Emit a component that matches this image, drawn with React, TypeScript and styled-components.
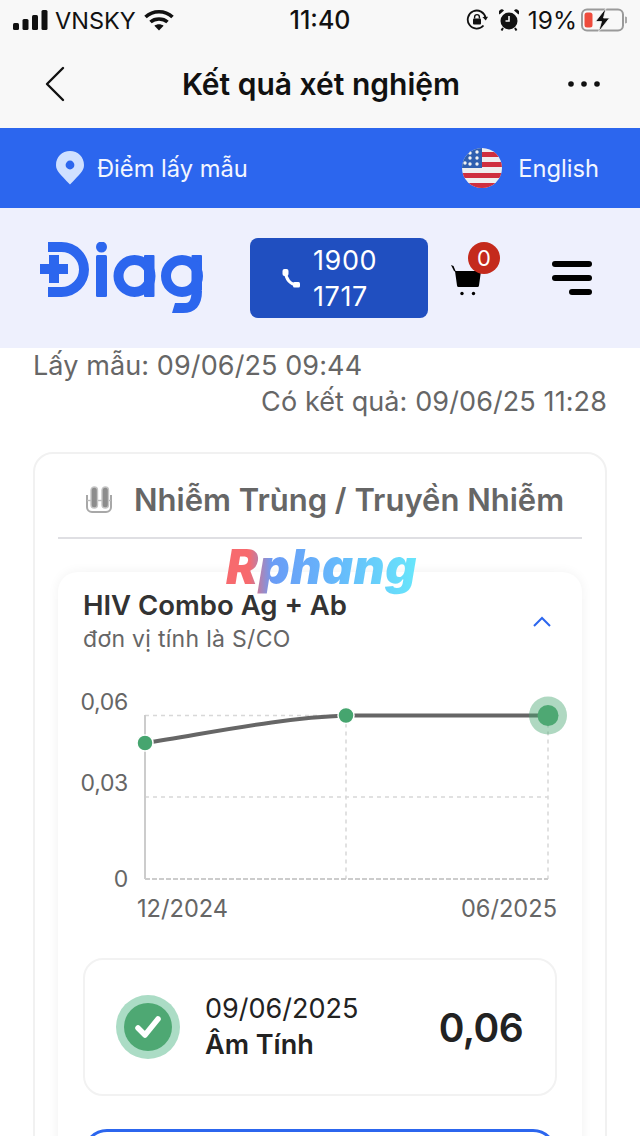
import styled, { createGlobalStyle } from 'styled-components';

const GlobalStyle = createGlobalStyle`
    html, body {
        margin: 0;
        padding: 0;
        height: 1136px;
        overflow: hidden;
        background: #ffffff;
        font-family: "Inter", "Noto Sans", sans-serif;
    }
    * { box-sizing: border-box; }
`;

const Page = styled.div`
    position: relative;
    width: 640px;
    height: 1136px;
    overflow: hidden;
`;

const TopChrome = styled.div`
    background: #f8f8f8;
    height: 128px;
`;

const StatusBar = styled.div`
    height: 40px;
    padding: 0 13px;
    display: grid;
    grid-template-columns: 1fr auto 1fr;
    align-items: center;
    color: #111111;
`;

const StatusGroup = styled.div<{ $end?: boolean }>`
    display: flex;
    align-items: center;
    justify-content: ${({ $end }) => ($end ? 'flex-end' : 'flex-start')};
    font-size: 24px;
    font-weight: 400;
`;

const Carrier = styled.span`
    font-size: 23.5px;
    margin: 0 8px 0 7px;
`;

const Clock = styled.span`
    font-size: 25px;
    font-weight: 500;
`;

const Percent = styled.span`
    margin: 0 4px 0 9px;
    font-size: 24.5px;
`;

const IconGap = styled.span`
    width: 11px;
`;

const NavBar = styled.div`
    height: 88px;
    padding: 0 40px 0 44px;
    display: flex;
    align-items: center;
    justify-content: space-between;
`;

const NavTitle = styled.div`
    font-size: 30px;
    font-weight: 600;
    color: #111111;
    margin-left: 8px;
`;

const BlueBar = styled.div`
    height: 80px;
    background: #2c66ee;
    padding: 0 41px 0 56px;
    display: flex;
    align-items: center;
    justify-content: space-between;
    color: #f3f6ff;
    font-size: 23.7px;
`;

const BarItem = styled.div<{ $gap: number }>`
    display: flex;
    align-items: center;
    gap: ${({ $gap }) => $gap}px;
`;

const Header = styled.div`
    height: 140px;
    background: #eef0fd;
    padding: 30px 48px 0 40px;
    display: flex;
    align-items: flex-start;
`;

const Logo = styled.svg`
    width: 163px;
    height: 72px;
    margin-top: 4px;
    flex: none;
`;

const PhoneButton = styled.div`
    width: 178px;
    height: 80px;
    margin-left: 47px;
    background: #204fc0;
    border-radius: 8px;
    padding-left: 32px;
    display: flex;
    align-items: center;
    gap: 13px;
    color: #ffffff;
    font-size: 27px;
    line-height: 36px;
    letter-spacing: 0.6px;
`;

const PhoneIcon = styled.svg`
    flex: none;
`;

const PhoneText = styled.span`
    width: 80px;
    padding-top: 1px;
`;

const CartBox = styled.div`
    position: relative;
    width: 32px;
    height: 36px;
    margin: 27px 0 0 23px;
`;

const CartBadge = styled.span`
    position: absolute;
    left: 17px;
    top: -23px;
    width: 32px;
    height: 32px;
    border-radius: 50%;
    background: #c42a1c;
    color: #ffffff;
    font-size: 22px;
    display: flex;
    align-items: center;
    justify-content: center;
`;

const MenuIcon = styled.div`
    margin: 23px 0 0 auto;
    width: 40px;
    display: flex;
    flex-direction: column;
    align-items: flex-end;
    gap: 8px;
`;

const MenuBar = styled.span<{ $w: number }>`
    display: block;
    width: ${({ $w }) => $w}px;
    height: 6px;
    border-radius: 3px;
    background: #000000;
`;

const Content = styled.div`
    padding: 0 33px;
`;

const Dates = styled.div`
    font-size: 27px;
    line-height: 36px;
    color: #666666;
    letter-spacing: 0.1px;
`;

const DateRight = styled.div`
    text-align: right;
`;

const GroupCard = styled.div`
    margin-top: 32px;
    border: 2px solid #f1f1f1;
    border-radius: 20px;
    padding: 0 23px;
    height: 800px;
`;

const GroupTitle = styled.div`
    height: 85px;
    padding: 8px 0 0 28px;
    display: flex;
    align-items: center;
    gap: 22px;
    font-size: 31px;
    font-weight: 600;
    color: #666666;
    border-bottom: 2px solid #dfdfe3;
`;

const TestCard = styled.div`
    margin-top: 33px;
    border-radius: 20px;
    padding: 16px 25px 0;
    box-shadow: 0 0 12px rgba(0, 0, 0, 0.06);
    height: 700px;
`;

const TestHead = styled.div`
    display: flex;
    align-items: center;
    justify-content: space-between;
    padding-right: 5px;
`;

const TestName = styled.div`
    font-size: 27.5px;
    line-height: 34px;
    font-weight: 600;
    color: #333333;
`;

const TestUnit = styled.div`
    font-size: 23px;
    line-height: 34px;
    color: #666666;
    letter-spacing: 0.3px;
`;

const Chart = styled.svg`
    display: block;
    width: 524px;
    height: 250px;
    margin: 24px 0 0 -25px;
    font-family: "Inter", sans-serif;
    font-size: 23.6px;
    fill: #666666;
`;

const AxisValue = styled.text`
    font-size: 23px;
    letter-spacing: -0.3px;
`;

const ResultCard = styled.div`
    margin-top: 28px;
    height: 138px;
    border: 2px solid #f2f2f2;
    border-radius: 20px;
    padding: 0 32px 0 31px;
    display: flex;
    align-items: center;
`;

const ResultBadge = styled.div`
    width: 64px;
    height: 64px;
    border-radius: 50%;
    background: #abdcc5;
    display: flex;
    align-items: center;
    justify-content: center;
`;

const ResultDot = styled.div`
    width: 48px;
    height: 48px;
    border-radius: 50%;
    background: #4ea873;
    display: flex;
    align-items: center;
    justify-content: center;
`;

const ResultText = styled.div`
    margin-left: 25px;
    font-size: 27px;
    line-height: 36px;
    color: #222222;
    flex: 1;
`;

const ResultLabel = styled.div`
    font-weight: 600;
`;

const ResultValue = styled.div`
    font-size: 39px;
    font-weight: 600;
    letter-spacing: -0.6px;
    color: #222222;
`;

const OutlineButton = styled.div`
    margin-top: 33px;
    height: 80px;
    border: 3px solid #2c66ee;
    border-radius: 24px;
`;

const Watermark = styled.div`
    position: absolute;
    left: 226px;
    top: 537px;
    font-family: "Inter", sans-serif;
    font-size: 48px;
    font-weight: 900;
    font-style: italic;
    line-height: 60px;
    letter-spacing: 0.6px;
    color: transparent;
    background: linear-gradient(90deg, #f76a6e 0%, #f76a6e 12%, #6a9cf6 24%, #66b6fb 55%, #68e6fb 100%);
    -webkit-background-clip: text;
    background-clip: text;
`;

const Signal = () => (
    <svg width="35" height="20" viewBox="0 0 35 20">
        <rect x="0" y="13" width="6" height="7" rx="1.5" fill="#111" />
        <rect x="9.5" y="9" width="6" height="11" rx="1.5" fill="#111" />
        <rect x="19" y="5" width="6" height="15" rx="1.5" fill="#111" />
        <rect x="28.5" y="0" width="6" height="20" rx="1.5" fill="#111" />
    </svg>
);

const Wifi = () => (
    <svg width="30" height="22" viewBox="0 0 30 22" fill="none" stroke="#111" strokeWidth="3.6">
        <path d="M1.5 8 C9 1 21 1 28.5 8" />
        <path d="M6.5 13 C11 9 19 9 23.5 13" />
        <path d="M15 21.5 L10.4 16.8 C13 14.8 17 14.8 19.6 16.8 Z" fill="#111" stroke="none" />
    </svg>
);

const RotationLock = () => (
    <svg width="22" height="22" viewBox="0 0 22 22" fill="none" stroke="#111" strokeWidth="1.8">
        <path d="M17.5 16.5 A9 9 0 1 1 19.6 9" />
        <path d="M16.4 8 L19.8 11.4 L22 7.8" fill="#111" stroke="none" />
        <rect x="7" y="9.5" width="8" height="6" rx="1" fill="#111" stroke="none" />
        <path d="M8.6 9.5 V8 a2.4 2.4 0 0 1 4.8 0 V9.5" strokeWidth="1.4" />
    </svg>
);

const Alarm = () => (
    <svg width="20" height="22" viewBox="0 0 20 22">
        <circle cx="10" cy="12" r="8.5" fill="#111" />
        <path d="M10 7 V12 H6.5" fill="none" stroke="#f8f8f8" strokeWidth="1.6" />
        <path d="M0.5 5.5 L5 1.5 A3 3 0 0 0 0.5 5.5 Z M19.5 5.5 L15 1.5 A3 3 0 0 1 19.5 5.5 Z" fill="#111" />
        <path d="M4 19 L2.5 21.5 M16 19 L17.5 21.5" stroke="#111" strokeWidth="2" />
    </svg>
);

const Battery = () => (
    <svg width="46" height="24" viewBox="0 0 46 24">
        <rect x="1" y="1.5" width="41" height="21" rx="5" fill="none" stroke="#9a9a9a" strokeWidth="2" />
        <path d="M44 8.5 a3 3.5 0 0 1 0 7 Z" fill="#a8a8a8" />
        <rect x="3.5" y="4.5" width="8" height="15" rx="2.5" fill="#ee4b3c" />
        <path d="M25 0 L14.5 13.5 H20.5 L17.5 24 L28.5 10 H22.5 Z" fill="#111" stroke="#f8f8f8" strokeWidth="0.8" />
    </svg>
);

const BackIcon = () => (
    <svg width="22" height="36" viewBox="0 0 22 36" fill="none" stroke="#111" strokeWidth="2.4" strokeLinecap="round" strokeLinejoin="round">
        <path d="M19 2 L3 18 L19 34" />
    </svg>
);

const MoreIcon = () => (
    <svg width="32" height="6" viewBox="0 0 32 6" fill="#111">
        <circle cx="3" cy="3" r="2.8" />
        <circle cx="16" cy="3" r="2.8" />
        <circle cx="29" cy="3" r="2.8" />
    </svg>
);

const PinIcon = () => (
    <svg width="28" height="34" viewBox="0 0 28 34">
        <path d="M14 0 C6 0 0 6 0 14 C0 20 4 23 14 33.5 C24 23 28 20 28 14 C28 6 22 0 14 0 Z" fill="#cfe0ff" />
        <circle cx="14" cy="14" r="4.4" fill="#2c66ee" />
    </svg>
);

const FlagIcon = () => (
    <svg width="40" height="40" viewBox="0 0 40 40">
        <defs>
            <clipPath id="flag-clip"><circle cx="20" cy="20" r="20" /></clipPath>
        </defs>
        <g clipPath="url(#flag-clip)">
            <rect width="40" height="40" fill="#efefef" />
            {[4, 14, 25, 35].map(y => <rect key={y} x={y < 20 ? 20 : 0} y={y} width="40" height="5" fill="#cf2f3f" />)}
            <rect width="20" height="20" fill="#2f5fb0" />
            {[[8, 5], [15, 4], [8, 10], [15, 10], [3, 15], [8, 16], [15, 16]].map(([x, y]) => (
                <circle key={`${x}-${y}`} cx={x} cy={y} r="1.7" fill="#f2f2f2" />
            ))}
        </g>
    </svg>
);

const DiagLogo = () => (
    <Logo viewBox="40 242 163 72">
        <g fill="#2c66ee">
            {/* D with cross */}
            <path d="M48 242 H61.5 A27.5 27.5 0 0 1 61.5 297 H48 V287 H61.5 A17.5 17.5 0 0 0 61.5 252 H48 Z" />
            <path d="M49 255 H59 V264 H68 V274 H59 V283 H49 V274 H40 V264 H49 Z" />
            {/* i */}
            <rect x="96" y="255" width="11" height="42" rx="1.5" />
            <circle cx="101.5" cy="247" r="5.5" />
            {/* a */}
            <rect x="144" y="255" width="10.5" height="42" rx="1" />
            {/* g */}
            <rect x="191.5" y="255" width="10.5" height="36" rx="1" />
            <path d="M175 303 H186 C189.5 303 191.5 299 191.5 291 H202 C202 306 195 313 183 313 H172 Z" />
        </g>
        <g fill="none" stroke="#2c66ee" strokeWidth="10">
            <circle cx="134.5" cy="276" r="16" />
            <circle cx="182" cy="276" r="16" />
        </g>
    </Logo>
);

const CartIcon = () => (
    <svg width="32" height="36" viewBox="0 0 32 36">
        <path d="M0 0 L2.5 1 L5 7 L3 6 Z" fill="#000" />
        <path d="M4 6 H30 L28 20.5 Q27.8 22 26.5 22 H7.5 Q6.2 22 6 20.5 Z" fill="#000" />
        <circle cx="11" cy="28.5" r="1.7" fill="#000" />
        <circle cx="22.5" cy="28.5" r="1.7" fill="#000" />
    </svg>
);

const TubesIcon = () => (
    <svg width="26" height="27" viewBox="0 0 26 27" fill="none">
        <path d="M1 9 V21 a5 5 0 0 0 5 5 H20 a5 5 0 0 0 5 -5 V9" stroke="#a8a8a8" strokeWidth="2" />
        <path d="M1 14.5 H25" stroke="#bbbbbb" strokeWidth="1.4" />
        <rect x="5" y="1" width="6.5" height="21" rx="3.2" fill="#8c8c8c" stroke="#c4c4c4" strokeWidth="1.4" />
        <rect x="16" y="1" width="6.5" height="21" rx="3.2" fill="#8c8c8c" stroke="#c4c4c4" strokeWidth="1.4" />
    </svg>
);

const points = [
    { x: 145, y: 743, r: 7 },
    { x: 346, y: 715.5, r: 7 },
];

const TrendChart = () => (
    <Chart viewBox="58 680 524 250">
        <g stroke="#d8d8d8" strokeWidth="1.5" strokeDasharray="4 4" fill="none">
            <path d="M145 715.5 H548" />
            <path d="M145 797 H548" />
            <path d="M346 715.5 V879" />
            <path d="M548 715.5 V879" />
        </g>
        <path d="M145 715 V879" fill="none" stroke="#cccccc" strokeWidth="2" />
        <path d="M145 879 H548" fill="none" stroke="#cccccc" strokeWidth="2" strokeDasharray="5 2" />
        <path d="M145 743 C 215 732 280 718 346 715.5 H548" fill="none" stroke="#666666" strokeWidth="4" />
        {points.map(p => (
            <circle key={p.x} cx={p.x} cy={p.y} r={p.r + 1} fill="#46a56f" stroke="#ffffff" strokeWidth="1.5" />
        ))}
        <circle cx="548" cy="715.5" r="19" fill="#46a56f" opacity="0.43" />
        <circle cx="548" cy="715.5" r="10.5" fill="#4ea873" />
        <AxisValue x="128" y="710" textAnchor="end">0,06</AxisValue>
        <AxisValue x="128" y="791" textAnchor="end">0,03</AxisValue>
        <AxisValue x="128" y="887" textAnchor="end">0</AxisValue>
        <text x="137" y="917">12/2024</text>
        <text x="557" y="917" textAnchor="end">06/2025</text>
    </Chart>
);

export default function App() {
    return (
        <Page>
            <GlobalStyle />
            <TopChrome>
                <StatusBar>
                    <StatusGroup>
                        <Signal />
                        <Carrier>VNSKY</Carrier>
                        <Wifi />
                    </StatusGroup>
                    <Clock>11:40</Clock>
                    <StatusGroup $end>
                        <RotationLock />
                        <IconGap />
                        <Alarm />
                        <Percent>19%</Percent>
                        <Battery />
                    </StatusGroup>
                </StatusBar>
                <NavBar>
                    <BackIcon />
                    <NavTitle>Kết quả xét nghiệm</NavTitle>
                    <MoreIcon />
                </NavBar>
            </TopChrome>

            <BlueBar>
                <BarItem $gap={13}>
                    <PinIcon />
                    <span>Điểm lấy mẫu</span>
                </BarItem>
                <BarItem $gap={16}>
                    <FlagIcon />
                    <span>English</span>
                </BarItem>
            </BlueBar>

            <Header>
                <DiagLogo />
                <PhoneButton>
                    <PhoneIcon width="18" height="19" viewBox="0 0 18 19" fill="none">
                        <path d="M3.6 3 C3.6 10 8.5 15.8 15 15.8" stroke="#ffffff" strokeWidth="3" />
                        <rect x="0.5" y="0" width="6" height="7" rx="2" fill="#ffffff" />
                        <rect x="11" y="13" width="7" height="5.5" rx="1.5" fill="#ffffff" />
                    </PhoneIcon>
                    <PhoneText>1900 1717</PhoneText>
                </PhoneButton>
                <CartBox>
                    <CartIcon />
                    <CartBadge>0</CartBadge>
                </CartBox>
                <MenuIcon>
                    <MenuBar $w={40} />
                    <MenuBar $w={40} />
                    <MenuBar $w={23} />
                </MenuIcon>
            </Header>

            <Content>
                <Dates>
                    <div>Lấy mẫu: 09/06/25 09:44</div>
                    <DateRight>Có kết quả: 09/06/25 11:28</DateRight>
                </Dates>
                <GroupCard>
                    <GroupTitle>
                        <TubesIcon />
                        <span>Nhiễm Trùng / Truyền Nhiễm</span>
                    </GroupTitle>
                    <TestCard>
                        <TestHead>
                            <div>
                                <TestName>HIV Combo Ag + Ab</TestName>
                                <TestUnit>đơn vị tính là S/CO</TestUnit>
                            </div>
                            <svg width="20" height="12" viewBox="0 0 20 12" fill="none" stroke="#2c66ee" strokeWidth="2">
                                <path d="M2 10 L10 2 L18 10" />
                            </svg>
                        </TestHead>
                        <TrendChart />
                        <ResultCard>
                            <ResultBadge>
                                <ResultDot>
                                    <svg width="28" height="24" viewBox="0 0 28 24" fill="none" stroke="#ffffff" strokeWidth="5.5" strokeLinecap="round" strokeLinejoin="round">
                                        <path d="M4 13 L11 20 L24 4" />
                                    </svg>
                                </ResultDot>
                            </ResultBadge>
                            <ResultText>
                                <div>09/06/2025</div>
                                <ResultLabel>Âm Tính</ResultLabel>
                            </ResultText>
                            <ResultValue>0,06</ResultValue>
                        </ResultCard>
                        <OutlineButton />
                    </TestCard>
                </GroupCard>
            </Content>

            <Watermark>Rphang</Watermark>
        </Page>
    );
}
